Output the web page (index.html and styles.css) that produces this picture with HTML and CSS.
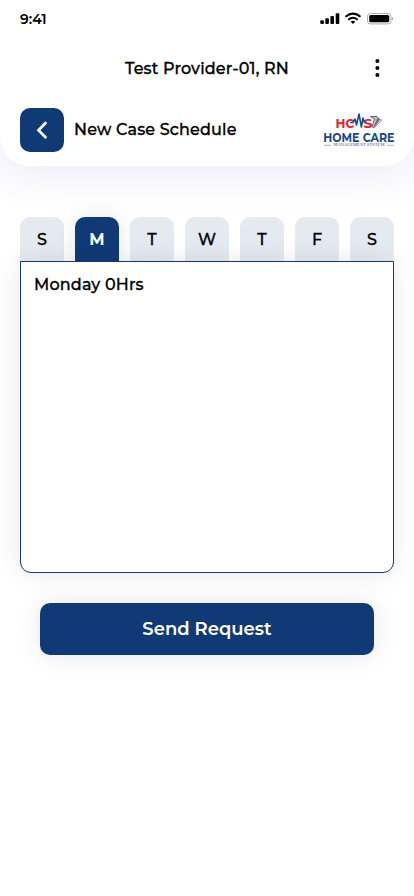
FILE: index.html
```html
<!DOCTYPE html>
<html lang="en">
<head>
<meta charset="utf-8">
<meta name="viewport" content="width=device-width, initial-scale=1">
<title>New Case Schedule</title>
<link rel="stylesheet" href="styles.css">
</head>
<body>
<header class="header">
  <div class="status">
    <span class="time">9:41</span>
    <svg class="status-icons" width="75" height="14" viewBox="0 0 75 14">
      <g>
        <rect x="0.3" y="8.2" width="3.6" height="3.8" rx="1"/>
        <rect x="5.3" y="6.2" width="3.6" height="5.8" rx="1"/>
        <rect x="10.4" y="4" width="3.6" height="8" rx="1"/>
        <rect x="15.7" y="1.3" width="3.6" height="10.7" rx="1"/>
      </g>
      <g fill="none" stroke="#000" stroke-width="2">
        <path d="M25.5 4.8Q33 -1.6 40.5 4.8"/>
        <path d="M28.3 7.7Q33 3.8 37.7 7.7"/>
      </g>
      <path d="M30.6 9.6Q33 7.7 35.4 9.6L33 12Z"/>
      <rect x="47.5" y="1.5" width="23.5" height="10.4" rx="3" fill="none" stroke="#aaa"/>
      <rect x="49.2" y="3" width="20" height="7.3" rx="1.5"/>
      <path d="M72 4.8Q74.4 6.7 72 8.6Z" fill="#aaa"/>
    </svg>
  </div>
  <div class="account">
    <span class="provider">Test Provider-01, RN</span>
    <svg class="more" width="6" height="20" viewBox="0 0 6 20"><circle cx="3.4" cy="3" r="2"/><circle cx="3.4" cy="10" r="2"/><circle cx="3.4" cy="17" r="2"/></svg>
  </div>
  <div class="titlebar">
    <button class="back" aria-label="Back"><svg width="44" height="44" viewBox="0 0 44 44"><path d="M25.5 15L18.5 22.2L25.5 29.2" fill="none" stroke="#fff" stroke-width="2.7" stroke-linecap="round" stroke-linejoin="miter"/></svg></button>
    <h1 class="title">New Case Schedule</h1>
    <svg class="logo" width="72" height="36" viewBox="0 0 72 36">
      <g class="logo-text">
        <text class="red" x="12.6" y="15.6" font-size="13.3" textLength="18.8" lengthAdjust="spacingAndGlyphs">HC</text>
        <text class="red" x="40.3" y="15.6" font-size="13.3" textLength="9.2" lengthAdjust="spacingAndGlyphs">S</text>
        <text class="blue" x="0.3" y="30" font-size="12" textLength="71.2" lengthAdjust="spacingAndGlyphs">HOME CARE</text>
        <text class="tiny" x="10.5" y="34.2" font-size="3" textLength="51" lengthAdjust="spacingAndGlyphs">MANAGEMENT SYSTEM</text>
      </g>
      <path d="M27 10.5H30L32 7L33.5 13L36 2L38.4 15L40 6L41.5 10.5" fill="none" stroke="#174c91" stroke-width="1.6" stroke-linejoin="round"/>
      <path d="M47.5 4.5H54L55.5 6L50.5 16L49 14.5L51.5 7Z" fill="#b9bec7" stroke="#454b59" stroke-width=".8"/>
      <path d="M54.5 6L57.3 7.2L50.8 16Z" fill="#666e7b"/>
      <path d="M57 6.5L58.5 8L51.5 15.5" fill="none" stroke="#e64b45" stroke-width=".9"/>
      <path d="M1 33.3H8M64 33.3H71" stroke="#a3aab5" stroke-width=".9"/>
    </svg>
  </div>
</header>
<main class="content">
  <nav class="tabs">
    <button class="tab">S</button><button class="tab active">M</button><button class="tab">T</button><button class="tab">W</button><button class="tab">T</button><button class="tab">F</button><button class="tab">S</button>
  </nav>
  <section class="panel"><span class="hours">Monday 0Hrs</span></section>
  <button class="send">Send Request</button>
</main>
</body>
</html>
```
FILE: styles.css
```css
* { box-sizing: border-box; }
body { margin: 0; min-height: 896px; background: #fff; color: #000; font: 500 16px/20px Montserrat, Inter, sans-serif; letter-spacing: .16px; -webkit-text-stroke: .3px; }
button { border: 0; padding: 0; font: inherit; color: inherit; }
svg { display: block; }
.header { height: 166px; border-radius: 0 0 30px 30px; background: #fff; box-shadow: 0 8px 40px rgba(80, 80, 200, .12); }
.status { height: 38px; padding: 0 19px 0 20px; display: flex; align-items: center; justify-content: space-between; }
.time { font-size: 14px; font-weight: 600; letter-spacing: 0; -webkit-text-stroke: 0; }
.account { height: 60px; padding: 0 34px 0 125px; display: flex; align-items: center; justify-content: space-between; }
.provider { padding-top: 1px; }
.titlebar { height: 64px; padding: 0 19px 0 20px; display: flex; align-items: center; }
.back { width: 44px; height: 44px; border-radius: 10px; background: #103a76; }
.title { margin: 0 0 0 10px; font-size: 16px; font-weight: 500; }
.logo { margin-left: auto; overflow: visible; -webkit-text-stroke: 0; }
.logo-text { font-family: Montserrat, Inter, sans-serif; font-weight: 700; letter-spacing: 0; }
.red { fill: #e5202b; }
.blue { fill: #1b4789; }
.tiny { fill: #7c8798; font-family: "Liberation Serif", serif; }
.content { padding: 51px 20px 0; }
.tabs { display: flex; justify-content: space-between; }
.tab { width: 44px; height: 44px; padding-top: 1px; border-radius: 10px 10px 0 0; background: #e5eaf1; letter-spacing: 0; }
.active { background: #103a76; color: #fff; font-weight: 700; -webkit-text-stroke: 0; box-shadow: 0 0 20px rgba(0, 0, 0, .1); }
.panel { position: relative; height: 312px; padding: 13px; border: 1px solid #103a76; border-radius: 0 0 11px 11px; background: #fff; box-shadow: 0 0 24px rgba(0, 0, 0, .1); }
.send { display: block; width: calc(100% - 40px); height: 52px; margin: 30px 20px 0; border-radius: 10px; background: #103a76; color: #fff; font-size: 18px; font-weight: 600; letter-spacing: 0; -webkit-text-stroke: 0; box-shadow: 0 0 24px rgba(0, 0, 0, .1); }
```
